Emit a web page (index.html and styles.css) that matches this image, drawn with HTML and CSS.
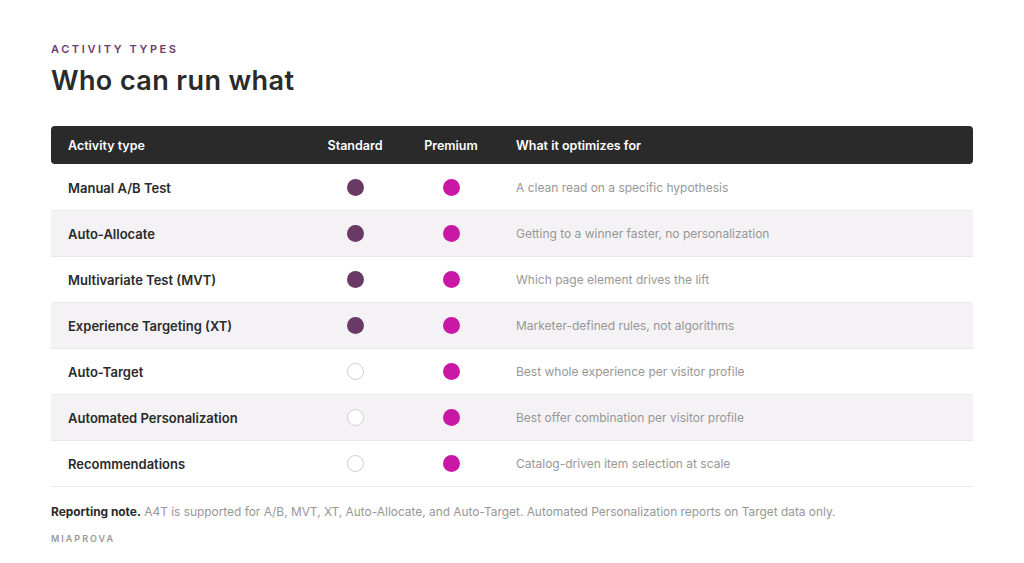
FILE: index.html
```html
<!DOCTYPE html>
<html lang="en">
<head>
<meta charset="utf-8">
<title>Who can run what</title>
<link rel="stylesheet" href="styles.css">
</head>
<body>
<main class="page">
  <p class="eyebrow">ACTIVITY TYPES</p>
  <h1 class="title">Who can run what</h1>
  <div class="table">
    <div class="row head">
      <div class="c name">Activity type</div>
      <div class="c mid">Standard</div>
      <div class="c mid">Premium</div>
      <div class="c desc">What it optimizes for</div>
    </div>
    <div class="row">
      <div class="c name">Manual A/B Test</div>
      <div class="c mid"><span class="dot std"></span></div>
      <div class="c mid"><span class="dot prem"></span></div>
      <div class="c desc">A clean read on a specific hypothesis</div>
    </div>
    <div class="row alt">
      <div class="c name">Auto-Allocate</div>
      <div class="c mid"><span class="dot std"></span></div>
      <div class="c mid"><span class="dot prem"></span></div>
      <div class="c desc">Getting to a winner faster, no personalization</div>
    </div>
    <div class="row">
      <div class="c name">Multivariate Test (MVT)</div>
      <div class="c mid"><span class="dot std"></span></div>
      <div class="c mid"><span class="dot prem"></span></div>
      <div class="c desc">Which page element drives the lift</div>
    </div>
    <div class="row alt">
      <div class="c name">Experience Targeting (XT)</div>
      <div class="c mid"><span class="dot std"></span></div>
      <div class="c mid"><span class="dot prem"></span></div>
      <div class="c desc">Marketer-defined rules, not algorithms</div>
    </div>
    <div class="row">
      <div class="c name">Auto-Target</div>
      <div class="c mid"><span class="dot empty"></span></div>
      <div class="c mid"><span class="dot prem"></span></div>
      <div class="c desc">Best whole experience per visitor profile</div>
    </div>
    <div class="row alt">
      <div class="c name">Automated Personalization</div>
      <div class="c mid"><span class="dot empty"></span></div>
      <div class="c mid"><span class="dot prem"></span></div>
      <div class="c desc">Best offer combination per visitor profile</div>
    </div>
    <div class="row">
      <div class="c name">Recommendations</div>
      <div class="c mid"><span class="dot empty"></span></div>
      <div class="c mid"><span class="dot prem"></span></div>
      <div class="c desc">Catalog-driven item selection at scale</div>
    </div>
  </div>
  <p class="note"><strong>Reporting note.</strong> A4T is supported for A/B, MVT, XT, Auto-Allocate, and Auto-Target. Automated Personalization reports on Target data only.</p>
  <p class="brand">MIAPROVA</p>
</main>
</body>
</html>
```
FILE: styles.css
```css
* { box-sizing: border-box; }
html, body { margin: 0; padding: 0; background: #fff; }
body { font-family: Inter, "Liberation Sans", sans-serif; color: #2a2a2a; }
.page { width: 1024px; height: 563px; padding: 42px 51px 0 51px; }
.eyebrow { margin: 0; font-size: 11px; font-weight: 600; letter-spacing: 2.6px; color: #6e3b6e; line-height: 14px; }
.title { margin: 9px 0 0 0; font-size: 27px; font-weight: 600; line-height: 32px; color: #2a2a2a; letter-spacing: 0.4px; }
.table { margin-top: 29px; width: 922px; }
.row { display: grid; grid-template-columns: 256px 96px 96px 1fr; height: 46px; align-items: center; border-bottom: 1px solid #ebe8ec; background: #fff; }
.row.alt { background: #f4f2f5; }
.row.head { background: #2a2a2a; color: #fff; border-radius: 4px; border-bottom: none; height: 38px; margin-bottom: 1px; }
.c { font-size: 13px; }
.name { padding-left: 17px; font-weight: 600; color: #2a2a2a; }
.head .c { color: #fff; font-weight: 600; font-size: 12.5px; }
.mid { display: flex; justify-content: center; align-items: center; }
.desc { padding-left: 17px; color: #979797; font-size: 12px; }
.dot { width: 17px; height: 17px; border-radius: 50%; display: block; }
.dot.std { background: #6a3a66; }
.dot.prem { background: #c918a6; }
.dot.empty { border: 1.5px solid #cfcdd1; background: #fff; }
.note { margin: 17px 0 0 0; font-size: 11.9px; color: #979797; line-height: 16px; }
.note strong { color: #2a2a2a; font-weight: 700; }
.brand { margin: 13px 0 0 0; font-size: 9px; letter-spacing: 2px; color: #9a9a9a; font-weight: 600; }
```
